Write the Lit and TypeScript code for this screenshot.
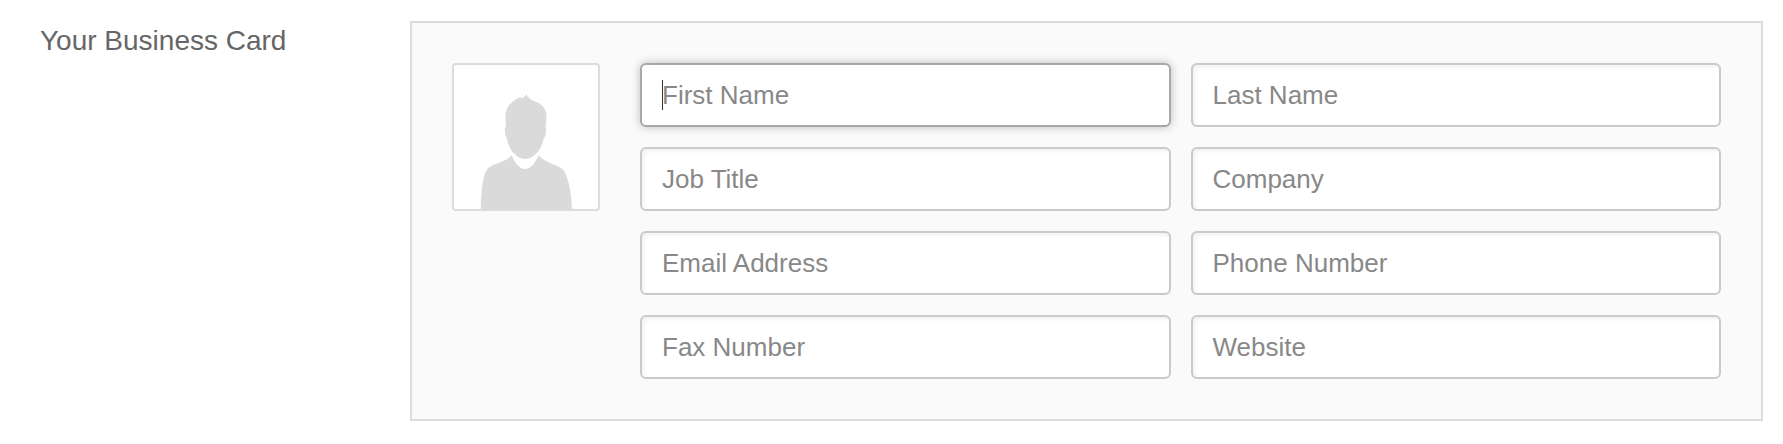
import { LitElement, html, css } from "lit";
import { customElement, property } from "lit/decorators.js";

@customElement("card-field")
class CardField extends LitElement {
  @property() label = "";
  @property({ type: Boolean, reflect: true }) active = false;

  static styles = css`
    :host {
      display: flex;
      align-items: center;
      box-sizing: border-box;
      height: 64px;
      padding: 0 20px;
      border: 2px solid #cacaca;
      border-radius: 6px;
      background: #fff;
      box-shadow: inset 2px 2px 4px rgba(0, 0, 0, 0.06);
      color: #888;
      font-size: 26px;
      line-height: 30px;
      white-space: nowrap;
      cursor: text;
    }
    :host([active]) {
      border-color: #a8a8a8;
      box-shadow: 0 0 10px rgba(0, 0, 0, 0.25);
    }
    .caret {
      width: 1px;
      height: 30px;
      margin-right: -1px;
      background: #333;
    }
  `;

  render() {
    return html`${this.active ? html`<span class="caret"></span>` : ""}<span>${this.label}</span>`;
  }
}

@customElement("app-root")
class AppRoot extends LitElement {
  static styles = css`
    :host {
      display: block;
      box-sizing: border-box;
      height: 444px;
      padding: 21px 20px 0 40px;
      background: #fff;
      font-family: "Liberation Sans", Arial, sans-serif;
    }
    .row {
      display: grid;
      grid-template-columns: 370px 1fr;
      align-items: start;
    }
    .title {
      padding-top: 4px;
      color: #666;
      font-size: 28px;
      line-height: 32px;
    }
    .panel {
      display: flex;
      gap: 40px;
      align-items: flex-start;
      padding: 40px;
      border: 2px solid #dcdcdc;
      background: #fafafa;
    }
    .avatar {
      box-sizing: border-box;
      flex: none;
      width: 148px;
      height: 148px;
      border: 2px solid #dcdcdc;
      border-radius: 4px;
      background: #fff;
      overflow: hidden;
    }
    .avatar svg {
      display: block;
    }
    .fields {
      flex: 1;
      display: grid;
      grid-template-columns: 1fr 1fr;
      gap: 20px;
    }
  `;

  fields = [
    "First Name",
    "Last Name",
    "Job Title",
    "Company",
    "Email Address",
    "Phone Number",
    "Fax Number",
    "Website",
  ];

  render() {
    return html`
      <div class="row">
        <div class="title">Your Business Card</div>
        <div class="panel">
          <div class="avatar">
            <svg width="144" height="144" viewBox="0 0 144 144" fill="#dadada">
              <path
                d="M66.4 31.8 L67.3 33.6 C69.5 32.8 70.8 31.2 72.3 29.2 C74.3 33 77 35.2 80.5 36.2 C88 38.5 92.4 43.5 92.4 50.5 C92.4 55 92.2 59 91.5 62.3 C92.4 62.5 92.2 65.5 91.6 69 C91.2 71.5 90.4 73.3 89.8 73.6 C87.5 85.5 79.5 94 71.3 94 C62.5 94 54.5 84.5 53 73.6 C51.5 71.5 50.5 66 51 62.5 C51.4 62.2 52 62.3 52.4 62.5 C51.5 58 51.3 54 51.5 49.5 C52 41.5 58 36 65.4 32.6 Z"
              />
              <path
                d="M57.7 90.2 C60.5 97.5 65.5 104 71 104 C76.8 104 81.5 97.5 84.7 90.2 C90.5 98 104 99 109.8 105.5 C113 110 118 126 117.8 144 L26.8 144 C27.2 130 28 110 34 103.3 C39 98 51.5 97.5 57.7 90.2 Z"
              />
            </svg>
          </div>
          <div class="fields">
            ${this.fields.map(
              (label, i) => html`<card-field .label=${label} ?active=${i === 0}></card-field>`
            )}
          </div>
        </div>
      </div>
    `;
  }
}
